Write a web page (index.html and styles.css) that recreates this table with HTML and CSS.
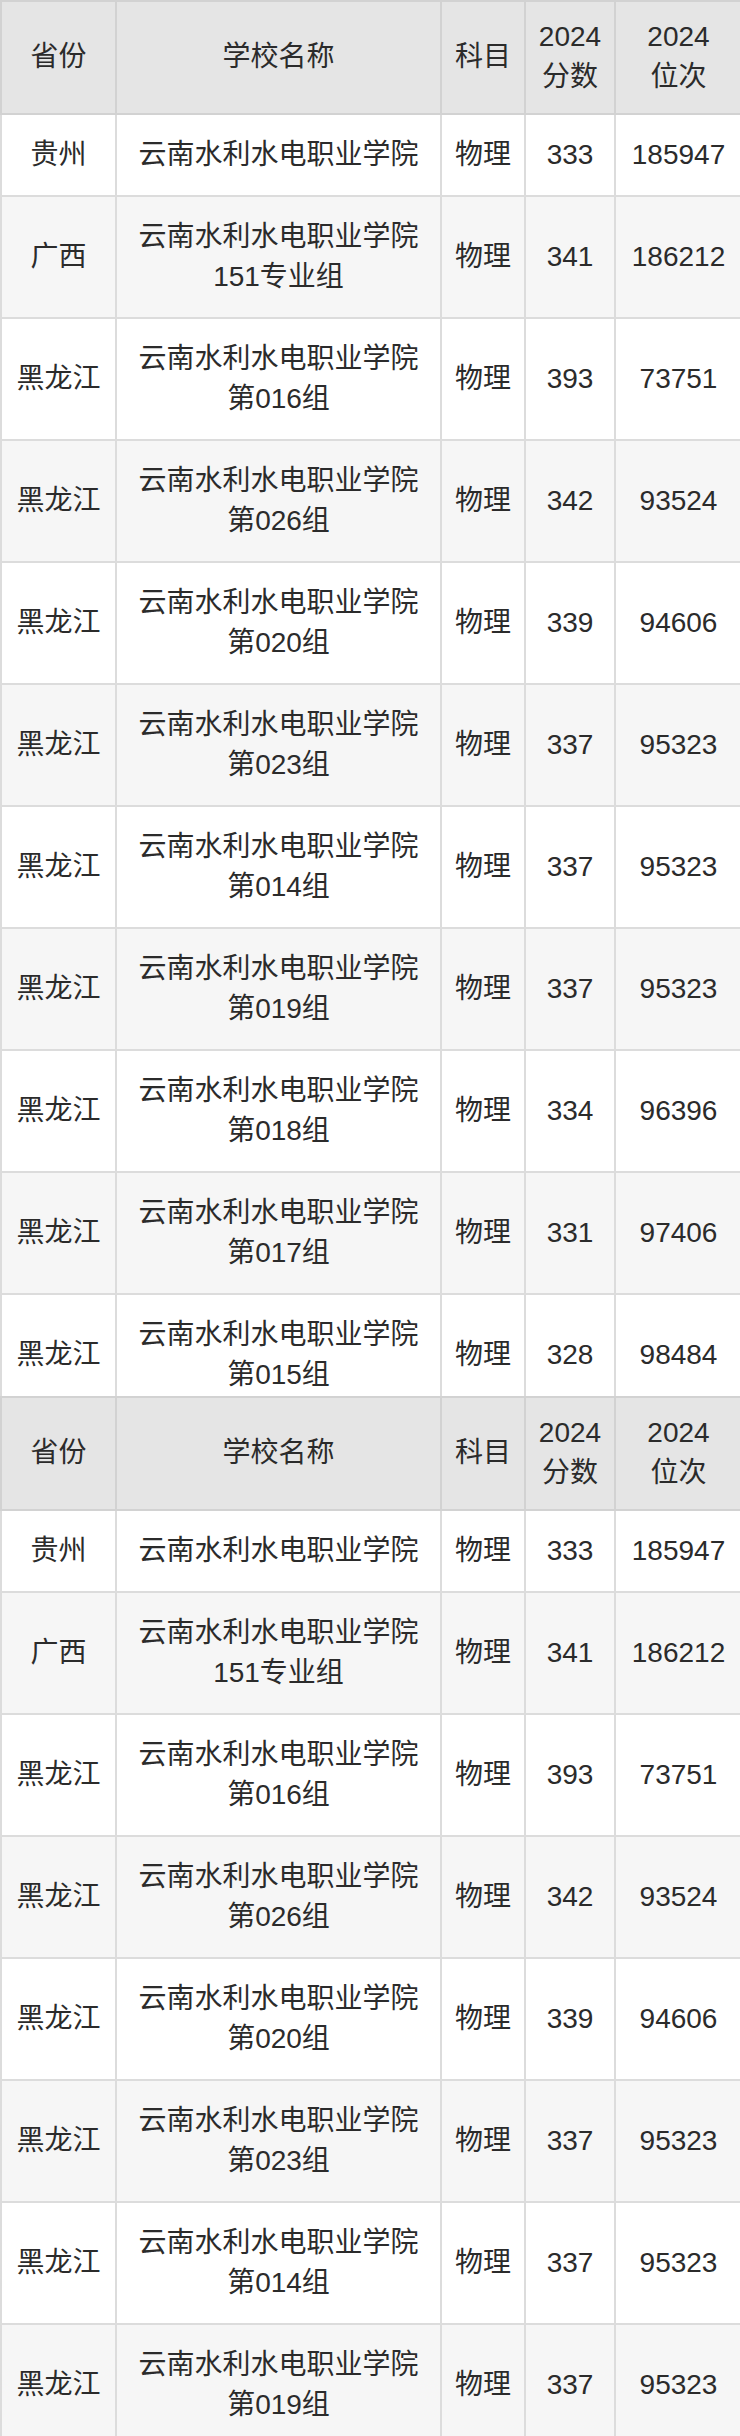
FILE: index.html
```html
<!DOCTYPE html>
<html lang="zh-CN">
<head>
<meta charset="utf-8">
<title>云南水利水电职业学院 2024 分数线</title>
<link rel="stylesheet" href="styles.css">
</head>
<body>
<div class="table-clip">
<table class="score-table">
  <colgroup>
    <col class="c-prov"><col class="c-school"><col class="c-subj"><col class="c-score"><col class="c-rank">
  </colgroup>
  <thead>
    <tr class="head"><th>省份</th><th>学校名称</th><th>科目</th><th>2024<br>分数</th><th>2024<br>位次</th></tr>
  </thead>
  <tbody>
    <tr><td>贵州</td><td>云南水利水电职业学院</td><td>物理</td><td>333</td><td>185947</td></tr>
    <tr><td>广西</td><td>云南水利水电职业学院<br>151专业组</td><td>物理</td><td>341</td><td>186212</td></tr>
    <tr><td>黑龙江</td><td>云南水利水电职业学院<br>第016组</td><td>物理</td><td>393</td><td>73751</td></tr>
    <tr><td>黑龙江</td><td>云南水利水电职业学院<br>第026组</td><td>物理</td><td>342</td><td>93524</td></tr>
    <tr><td>黑龙江</td><td>云南水利水电职业学院<br>第020组</td><td>物理</td><td>339</td><td>94606</td></tr>
    <tr><td>黑龙江</td><td>云南水利水电职业学院<br>第023组</td><td>物理</td><td>337</td><td>95323</td></tr>
    <tr><td>黑龙江</td><td>云南水利水电职业学院<br>第014组</td><td>物理</td><td>337</td><td>95323</td></tr>
    <tr><td>黑龙江</td><td>云南水利水电职业学院<br>第019组</td><td>物理</td><td>337</td><td>95323</td></tr>
    <tr><td>黑龙江</td><td>云南水利水电职业学院<br>第018组</td><td>物理</td><td>334</td><td>96396</td></tr>
    <tr><td>黑龙江</td><td>云南水利水电职业学院<br>第017组</td><td>物理</td><td>331</td><td>97406</td></tr>
    <tr><td>黑龙江</td><td>云南水利水电职业学院<br>第015组</td><td>物理</td><td>328</td><td>98484</td></tr>
  </tbody>
</table>
</div>
<table class="score-table">
  <colgroup>
    <col class="c-prov"><col class="c-school"><col class="c-subj"><col class="c-score"><col class="c-rank">
  </colgroup>
  <thead>
    <tr class="head"><th>省份</th><th>学校名称</th><th>科目</th><th>2024<br>分数</th><th>2024<br>位次</th></tr>
  </thead>
  <tbody>
    <tr><td>贵州</td><td>云南水利水电职业学院</td><td>物理</td><td>333</td><td>185947</td></tr>
    <tr><td>广西</td><td>云南水利水电职业学院<br>151专业组</td><td>物理</td><td>341</td><td>186212</td></tr>
    <tr><td>黑龙江</td><td>云南水利水电职业学院<br>第016组</td><td>物理</td><td>393</td><td>73751</td></tr>
    <tr><td>黑龙江</td><td>云南水利水电职业学院<br>第026组</td><td>物理</td><td>342</td><td>93524</td></tr>
    <tr><td>黑龙江</td><td>云南水利水电职业学院<br>第020组</td><td>物理</td><td>339</td><td>94606</td></tr>
    <tr><td>黑龙江</td><td>云南水利水电职业学院<br>第023组</td><td>物理</td><td>337</td><td>95323</td></tr>
    <tr><td>黑龙江</td><td>云南水利水电职业学院<br>第014组</td><td>物理</td><td>337</td><td>95323</td></tr>
    <tr><td>黑龙江</td><td>云南水利水电职业学院<br>第019组</td><td>物理</td><td>337</td><td>95323</td></tr>
  </tbody>
</table>
</body>
</html>
```
FILE: styles.css
```css
html, body {
  margin: 0;
  padding: 0;
  background: #ffffff;
}

.table-clip {
  height: 1396px;
  overflow: hidden;
}

.score-table {
  width: 740px;
  border-collapse: collapse;
  table-layout: fixed;
  font-family: "Liberation Sans", "Noto Sans CJK SC", sans-serif;
  font-size: 28px;
  line-height: 40px;
  color: #2b2b2b;
}

.c-prov { width: 115px; }
.c-school { width: 325px; }
.c-subj { width: 84px; }
.c-score { width: 90px; }
.c-rank { width: 126px; }

.score-table th,
.score-table td {
  border: 2px solid #dcdcdc;
  text-align: center;
  vertical-align: middle;
  padding: 20px 0;
  font-weight: normal;
}

.score-table th:last-child,
.score-table td:last-child {
  border-right: 0;
}

.score-table .head th {
  background: #e5e5e5;
  border-color: #d2d2d2;
  padding: 15px 0 16px;
}

.score-table tbody tr:nth-child(even) td {
  background: #f6f6f6;
}

.score-table tbody tr:nth-child(odd) td {
  background: #ffffff;
}
```
